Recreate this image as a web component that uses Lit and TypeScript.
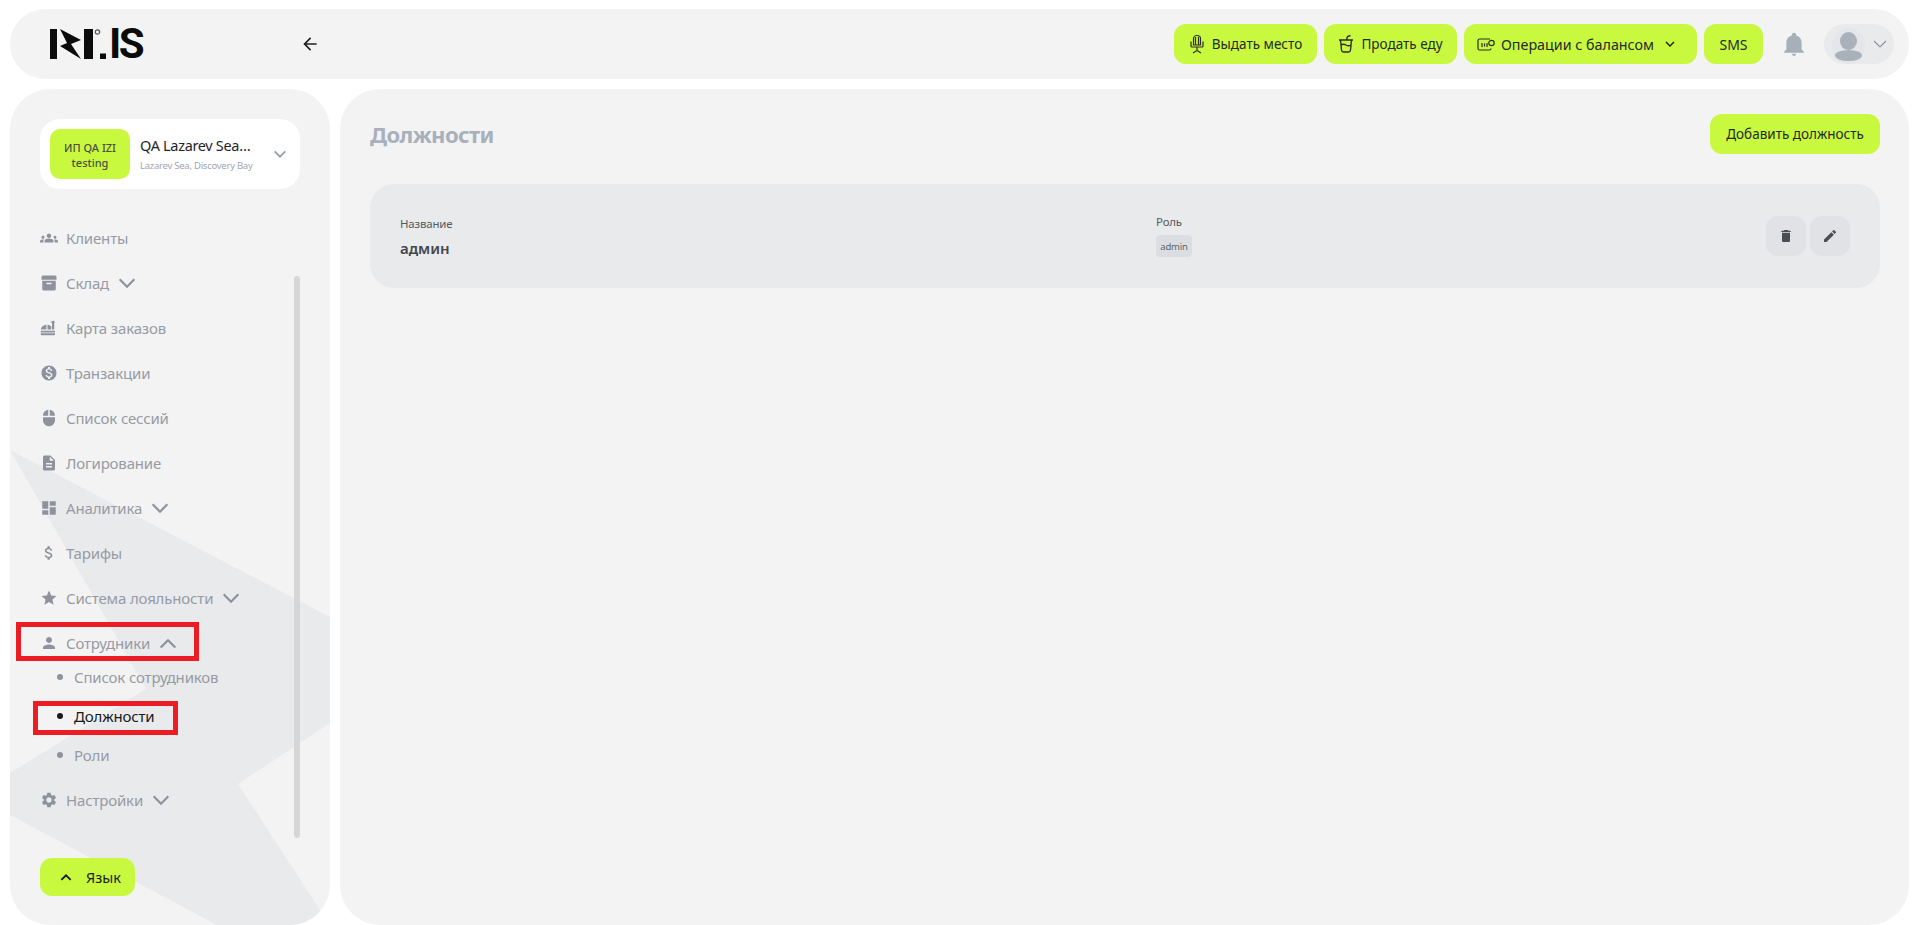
import { LitElement, html, css } from "lit";
import { customElement } from "lit/decorators.js";

const P: Record<string, string> = {
  groups: "M12 12.75c1.63 0 3.07.39 4.24.9 1.08.48 1.76 1.56 1.76 2.73V18H6v-1.61c0-1.18.68-2.26 1.76-2.73 1.17-.52 2.61-.91 4.24-.91zM4 13c1.1 0 2-.9 2-2s-.9-2-2-2-2 .9-2 2 .9 2 2 2zm1.13 1.1C4.76 14.04 4.39 14 4 14c-.99 0-1.93.21-2.78.58C.48 14.9 0 15.62 0 16.43V18h4.5v-1.61c0-.83.23-1.61.63-2.29zM20 13c1.1 0 2-.9 2-2s-.9-2-2-2-2 .9-2 2 .9 2 2 2zm4 3.43c0-.81-.48-1.53-1.22-1.85-.85-.37-1.79-.58-2.78-.58-.39 0-.76.04-1.13.1.4.68.63 1.46.63 2.29V18H24v-1.57zM12 6c1.66 0 3 1.34 3 3s-1.34 3-3 3-3-1.34-3-3 1.34-3 3-3z",
  box: "M4 2h16q2 0 2 2v3.500H2V4q0-2 2-2zM3 9h18v11q0 2-2 2H5q-2 0-2-2zM8.500 11.500v2h7v-2z",
  dinner: "M1 14c.5-3.500 3.500-6 7.500-6.500V14zM10 7.500c2 .2 4 1 5 2.500v4h-5zM16 14V5l-2-1 4-2 2 2-1 1v9zM1 15.500h19V18H1zM1 19h19v1.500q0 1-1 1H2q-1 0-1-1z",
  money: "M12 2C6.48 2 2 6.48 2 12s4.48 10 10 10 10-4.48 10-10S17.52 2 12 2zm1.41 16.09V20h-2.67v-1.930c-1.710-.36-3.160-1.460-3.270-3.400h1.960c.1 1.050.82 1.870 2.650 1.870 1.960 0 2.400-.98 2.400-1.590 0-.83-.44-1.610-2.670-2.140-2.480-.6-4.180-1.620-4.180-3.670 0-1.720 1.390-2.840 3.110-3.210V4h2.670v1.950c1.860.45 2.790 1.860 2.850 3.390H14.300c-.05-1.110-.64-1.870-2.220-1.870-1.500 0-2.400.68-2.400 1.640 0 .84.65 1.390 2.670 1.910s4.180 1.390 4.180 3.910c-.01 1.830-1.380 2.830-3.120 3.160z",
  mouse: "M13 1.070V9h7c0-4.080-3.050-7.440-7-7.930zM4 15c0 4.420 3.580 8 8 8s8-3.580 8-8v-4H4v4zm7-13.930C7.050 1.560 4 4.920 4 9h7V1.070z",
  doc: "M14 2H6c-1.100 0-1.990.9-1.990 2L4 20c0 1.100.89 2 1.990 2H18c1.100 0 2-.9 2-2V8l-6-6zm2 16H8v-2h8v2zm0-4H8v-2h8v2zm-3-5V3.500L18.500 9H13z",
  dash: "M3 13h8V3H3v10zm0 8h8v-6H3v6zm10 0h8V11h-8v10zm0-18v6h8V3h-8z",
  dollar: "M11.800 10.900c-2.270-.59-3-1.200-3-2.150 0-1.090 1.010-1.850 2.700-1.850 1.780 0 2.440.85 2.500 2.100h2.210c-.07-1.720-1.120-3.300-3.210-3.810V3h-3v2.160c-1.940.42-3.500 1.680-3.500 3.610 0 2.310 1.910 3.460 4.700 4.130 2.500.6 3 1.480 3 2.410 0 .69-.49 1.790-2.700 1.790-2.060 0-2.870-.92-2.980-2.100h-2.200c.12 2.190 1.760 3.420 3.680 3.830V21h3v-2.150c1.950-.37 3.500-1.500 3.500-3.550 0-2.840-2.430-3.810-4.700-4.400z",
  star: "M12 17.270L18.180 21l-1.640-7.030L22 9.240l-7.190-.61L12 2 9.190 8.630 2 9.240l5.460 4.730L5.820 21z",
  person: "M12 12c2.210 0 4-1.790 4-4s-1.790-4-4-4-4 1.790-4 4 1.790 4 4 4zm0 2c-2.670 0-8 1.340-8 4v2h16v-2c0-2.660-5.330-4-8-4z",
  gear: "M19.140 12.940c.04-.3.06-.61.06-.94 0-.32-.02-.64-.07-.94l2.030-1.580c.18-.14.23-.41.12-.61l-1.920-3.320c-.12-.22-.37-.29-.59-.22l-2.390.96c-.5-.38-1.030-.7-1.620-.94l-.36-2.540c-.04-.24-.24-.41-.48-.41h-3.840c-.24 0-.43.17-.47.41l-.36 2.540c-.59.24-1.130.57-1.620.94l-2.390-.96c-.22-.08-.47 0-.59.22L2.740 8.870c-.12.21-.08.47.12.61l2.030 1.580c-.05.3-.09.63-.09.94s.02.64.07.94l-2.030 1.580c-.18.14-.23.41-.12.61l1.920 3.320c.12.22.37.29.59.22l2.390-.96c.5.38 1.030.7 1.620.94l.36 2.54c.05.24.24.41.48.41h3.840c.24 0 .44-.17.47-.41l.36-2.540c.59-.24 1.130-.56 1.620-.94l2.390.96c.22.08.47 0 .59-.22l1.920-3.320c.12-.22.07-.47-.12-.61l-2.010-1.580zM12 15.600c-1.980 0-3.600-1.620-3.600-3.600s1.620-3.600 3.600-3.600 3.600 1.620 3.600 3.600-1.620 3.600-3.600 3.600z",
  del: "M6 19c0 1.100.9 2 2 2h8c1.100 0 2-.9 2-2V7H6v12zM19 4h-3.500l-1-1h-5l-1 1H5v2h14V4z",
  edit: "M3 17.250V21h3.750L17.810 9.940l-3.750-3.750L3 17.250zM20.710 7.040c.39-.39.39-1.020 0-1.410l-2.340-2.340c-.39-.39-1.020-.39-1.410 0l-1.830 1.830 3.750 3.750 1.830-1.830z",
  bell: "M12 23c1.100 0 2-.9 2-2h-4c0 1.100.89 2 2 2zm7-6v-6c0-3.500-1.900-6-5-6.800V3.500C14 2.400 13.100 1.500 12 1.500s-2 .9-2 2v.7C6.900 5 5 7.500 5 11v6l-2 2v1h18v-1l-2-2z",
  back: "M20 11H7.830l5.590-5.590L12 4l-8 8 8 8 1.410-1.410L7.830 13H20v-2z",
};

const icon = (n: string, cls = "ic") =>
  html`<svg class=${cls} viewBox="0 0 24 24" fill="currentColor" fill-rule="evenodd"><path d=${P[n]}></path></svg>`;
const chev = (up = false, cls = "chev") =>
  html`<svg class=${cls} viewBox="0 0 24 24" fill="none" stroke="currentColor" stroke-width="3"><path d=${up ? "M4 17l8-8 8 8" : "M4 8l8 8 8-8"}></path></svg>`;

@customElement("app-root")
export class AppRoot extends LitElement {
  static styles = css`
    :host {
      display: grid;
      grid-template-columns: 320px 1fr;
      grid-template-rows: 70px 1fr;
      gap: 10px;
      width: 1914px;
      height: 925px;
      box-sizing: border-box;
      padding: 9px 5px 0 10px;
      overflow: hidden;
      background: #fff;
      font-family: "Noto Sans", "Open Sans", sans-serif;
      color: #1f2328;
    }
    .top {
      grid-column: 1 / 3;
      display: flex;
      align-items: center;
      background: #f3f3f3;
      border-radius: 35px;
      padding: 0 15px 0 40px;
    }
    .logo { display: flex; align-items: center; height: 30px; width: 250px; color: #0b0b0b; }
    .logo svg { width: 62px; height: 30px; flex: none; }
    .logo span {
      font: 700 42px/30px Roboto, sans-serif;
      letter-spacing: -2.500px;
      margin-left: -3px;
    }
    .backb { width: 20px; height: 20px; color: #222; flex: none; }
    .tools { margin-left: auto; display: flex; align-items: center; gap: 7px; }
    .btn {
      display: flex;
      align-items: center;
      justify-content: center;
      height: 40px;
      background: #c9f93f;
      border-radius: 12px;
      font-size: 13.500px;
      color: #26292b;
      white-space: nowrap;
      box-sizing: border-box;
    }
    .btn svg.t { width: 20px; height: 20px; flex: none; margin-right: 5px; }
    .b1 { width: 143px; padding-right: 2px; }
    .b2 { width: 133px; padding-right: 2px; }
    .b3 { width: 233px; font-size: 14.300px; padding-right: 9px; }
    .b4 { width: 59px; font-size: 14px; }
    .b3 .chev { width: 12px; height: 12px; margin-left: 10px; color: #222; }
    .bell { width: 26px; height: 26px; color: #a7afb8; margin: 0 10px 0 11px; flex: none; }
    .user {
      display: flex;
      align-items: center;
      width: 70px;
      height: 40px;
      border-radius: 20px;
      background: #e9eaec;
      box-sizing: border-box;
      padding-left: 8px;
    }
    .user svg.a { width: 33px; height: 40px; flex: none; }
    .user .chev { width: 18px; height: 18px; margin-left: 6px; color: #8c929b; stroke-width: 1.600; }

    .side {
      position: relative;
      overflow: hidden;
      display: flex;
      flex-direction: column;
      background: #f3f3f3;
      border-radius: 40px;
      padding: 30px 30px 29px;
      min-height: 0;
    }
    .wm { position: absolute; left: 0; top: 0; width: 320px; height: 836px; }
    .company {
      position: relative;
      flex: none;
      display: flex;
      align-items: center;
      height: 70px;
      background: #fff;
      border-radius: 20px;
      padding: 0 10px;
      box-sizing: border-box;
    }
    .badge {
      width: 80px;
      height: 50px;
      border-radius: 10px;
      background: #c9f93f;
      display: flex;
      flex-direction: column;
      align-items: center;
      justify-content: center;
      font-size: 11px;
      line-height: 15px;
      padding-top: 1px;
      box-sizing: border-box;
      color: #4a4f45;
      flex: none;
      font-weight: 500;
    }
    .cinfo { margin-left: 10px; flex: 1; min-width: 0; }
    .cname { font-size: 14.500px; line-height: 20px; color: #1f2328; letter-spacing: -0.330px; white-space: nowrap; }
    .csub { font-size: 9.500px; line-height: 14px; margin-top: 4px; color: #a1a6ae; white-space: nowrap; letter-spacing: -0.250px; }
    .company .chev { width: 16px; height: 16px; color: #9aa0a9; margin: 0 2px 0 0; flex: none; stroke-width: 2.800; }

    nav { position: relative; flex: 1; min-height: 0; margin-top: 26px; }
    .row {
      display: flex;
      align-items: center;
      height: 45px;
      color: #969ba4;
      font-size: 15px;
      letter-spacing: -0.160px;
      white-space: nowrap;
    }
    .ic { width: 18px; height: 18px; margin-right: 8px; color: #8d929c; flex: none; }
    .row .chev { width: 22px; height: 22px; margin-left: 7px; color: #8d929c; stroke-width: 2.400; }
    .subs { margin-top: -8px; margin-bottom: 3px; }
    .sub {
      display: flex;
      align-items: center;
      height: 39px;
      padding-left: 17px;
      color: #969ba4;
      font-size: 15px;
      letter-spacing: -0.160px;
    }
    .sub i { width: 6px; height: 6px; border-radius: 50%; background: #8d929c; margin-right: 11px; flex: none; }
    .sub.on { color: #17191c; }
    .sub.on i { background: #17191c; }
    .lang {
      position: relative;
      flex: none;
      display: flex;
      align-items: center;
      width: 95px;
      height: 38px;
      background: #c9f93f;
      border-radius: 12px;
      font-size: 14.500px;
      color: #1b1d1f;
      padding-left: 19px;
      box-sizing: border-box;
    }
    .lang .chev { width: 14px; height: 14px; margin-right: 13px; color: #1b1d1f; stroke-width: 3.200; }
    .sb {
      position: absolute;
      left: 284px;
      top: 187px;
      width: 6px;
      height: 562px;
      border-radius: 3px;
      background: #d6d6d6;
    }
    .mark { position: absolute; border: 5px solid #ec1c24; box-sizing: border-box; }
    .m1 { left: 6px; top: 533px; width: 183px; height: 39px; }
    .m2 { left: 23px; top: 612px; width: 145px; height: 34px; }

    .main {
      background: #f3f3f3;
      border-radius: 40px;
      padding: 25px 29px 0 30px;
      min-width: 0;
    }
    .head { display: flex; align-items: center; justify-content: space-between; }
    h1 { margin: 0; font-size: 22px; font-weight: 700; color: #a8b0bb; letter-spacing: -0.600px; }
    .add { width: 170px; }
    .card {
      margin-top: 30px;
      height: 104px;
      display: flex;
      align-items: center;
      background: #e9eaec;
      border-radius: 24px;
      padding: 0 30px;
    }
    .c1 { width: 756px; flex: none; padding-top: 2px; }
    .lab { font-size: 11.500px; line-height: 16px; color: #555a60; letter-spacing: -0.200px; }
    .val { font-size: 15px; font-weight: 600; line-height: 22px; margin-top: 5px; color: #43474d; }
    .c2 { flex: 1; margin-top: -1px; }
    .chip {
      display: flex;
      align-items: center;
      justify-content: center;
      width: 36px;
      height: 22px;
      margin-top: 5px;
      border-radius: 4px;
      background: #dadee3;
      font-size: 9.500px;
      color: #5e646b;
      letter-spacing: -0.200px;
    }
    .acts { display: flex; gap: 4px; }
    .act {
      display: flex;
      align-items: center;
      justify-content: center;
      width: 40px;
      height: 40px;
      border-radius: 12px;
      background: #e1e2e6;
      color: #4b4d55;
    }
    .act svg { width: 16px; height: 16px; }
  `;

  private item(ic: string, label: string, ch?: "d" | "u") {
    return html`<div class="row">${icon(ic)}<span>${label}</span>${ch ? chev(ch === "u") : ""}</div>`;
  }

  render() {
    return html`
      <header class="top">
        <div class="logo">
          <svg viewBox="0 0 62 30" fill="currentColor">
            <path d="M0 0h7v30H0zM10 0l21 11-10 4 10 15-21-13 7-3zM34 0h9v30h-9z"></path>
            <circle cx="47.500" cy="3" r="2.200" fill="none" stroke="#555" stroke-width="1.200"></circle>
            <path d="M50 24.500h6V30h-6z"></path>
          </svg>
          <span>IS</span>
        </div>
        <svg class="backb" viewBox="0 0 24 24" fill="currentColor"><path d=${P.back}></path></svg>
        <div class="tools">
          <div class="btn b1">
            <svg class="t" viewBox="0 0 20 20" fill="none" stroke="#2b2e2a" stroke-width="1.200">
              <path d="M6.500 11V4.500a3.500 3 0 0 1 7 0V11zM8.500 3v8M11.500 3v8M4 7.500V12q0 1 1 1h10q1 0 1-1V7.500M10 13v3.500M6 19l4-2.500 4 2.500"></path>
            </svg>
            Выдать место
          </div>
          <div class="btn b2">
            <svg class="t" viewBox="0 0 20 20" fill="none" stroke="#2b2e2a" stroke-width="1.400">
              <path d="M3 6h14M4.500 6l1 10q.2 2 2 2h5q1.800 0 2-2l1-10M5 11q2.500-1.500 5 0t5 0M10.500 6l1-3.500 3-1"></path>
            </svg>
            Продать еду
          </div>
          <div class="btn b3">
            <svg class="t" viewBox="0 0 20 20" fill="none" stroke="#2b2e2a" stroke-width="1.200">
              <path d="M14 5H3.500Q2 5 2 6.500v8Q2 16 3.500 16h10q1.500 0 1.500-1.500M6 9v4M8.500 9.500v3M11 9v4"></path>
              <circle cx="15.500" cy="9" r="2.700"></circle>
            </svg>
            Операции с балансом
            ${chev()}
          </div>
          <div class="btn b4">SMS</div>
          <svg class="bell" viewBox="0 0 24 24" fill="currentColor"><path d=${P.bell}></path></svg>
          <div class="user">
            <svg class="a" viewBox="0 0 33 40">
              <ellipse cx="16.500" cy="22" rx="16.500" ry="18" fill="#e4e6e9"></ellipse>
              <ellipse cx="16.500" cy="17" rx="8.500" ry="9" fill="#a9b1ba"></ellipse>
              <ellipse cx="16.500" cy="31.500" rx="13.500" ry="5.500" fill="#a9b1ba"></ellipse>
            </svg>
            ${chev()}
          </div>
        </div>
      </header>

      <aside class="side">
        <svg class="wm" viewBox="0 0 320 836" fill="#e9eaec">
          <path d="M0 361L320 528V634L228 695L310 821L320 836H207L0 726V684L136 600z"></path>
        </svg>
        <div class="company">
          <div class="badge"><span>ИП QA IZI</span><span>testing</span></div>
          <div class="cinfo">
            <div class="cname">QA Lazarev Sea…</div>
            <div class="csub">Lazarev Sea, Discovery Bay</div>
          </div>
          ${chev()}
        </div>
        <nav>
          ${this.item("groups", "Клиенты")}
          ${this.item("box", "Склад", "d")}
          ${this.item("dinner", "Карта заказов")}
          ${this.item("money", "Транзакции")}
          ${this.item("mouse", "Список сессий")}
          ${this.item("doc", "Логирование")}
          ${this.item("dash", "Аналитика", "d")}
          ${this.item("dollar", "Тарифы")}
          ${this.item("star", "Система лояльности", "d")}
          ${this.item("person", "Сотрудники", "u")}
          <div class="subs">
            <div class="sub"><i></i>Список сотрудников</div>
            <div class="sub on"><i></i>Должности</div>
            <div class="sub"><i></i>Роли</div>
          </div>
          ${this.item("gear", "Настройки", "d")}
        </nav>
        <div class="lang">${chev(true)}Язык</div>
        <div class="sb"></div>
        <div class="mark m1"></div>
        <div class="mark m2"></div>
      </aside>

      <main class="main">
        <div class="head">
          <h1>Должности</h1>
          <div class="btn add">Добавить должность</div>
        </div>
        <section class="card">
          <div class="c1">
            <div class="lab">Название</div>
            <div class="val">админ</div>
          </div>
          <div class="c2">
            <div class="lab">Роль</div>
            <div class="chip">admin</div>
          </div>
          <div class="acts">
            <div class="act">${icon("del", "")}</div>
            <div class="act">${icon("edit", "")}</div>
          </div>
        </section>
      </main>
    `;
  }
}
